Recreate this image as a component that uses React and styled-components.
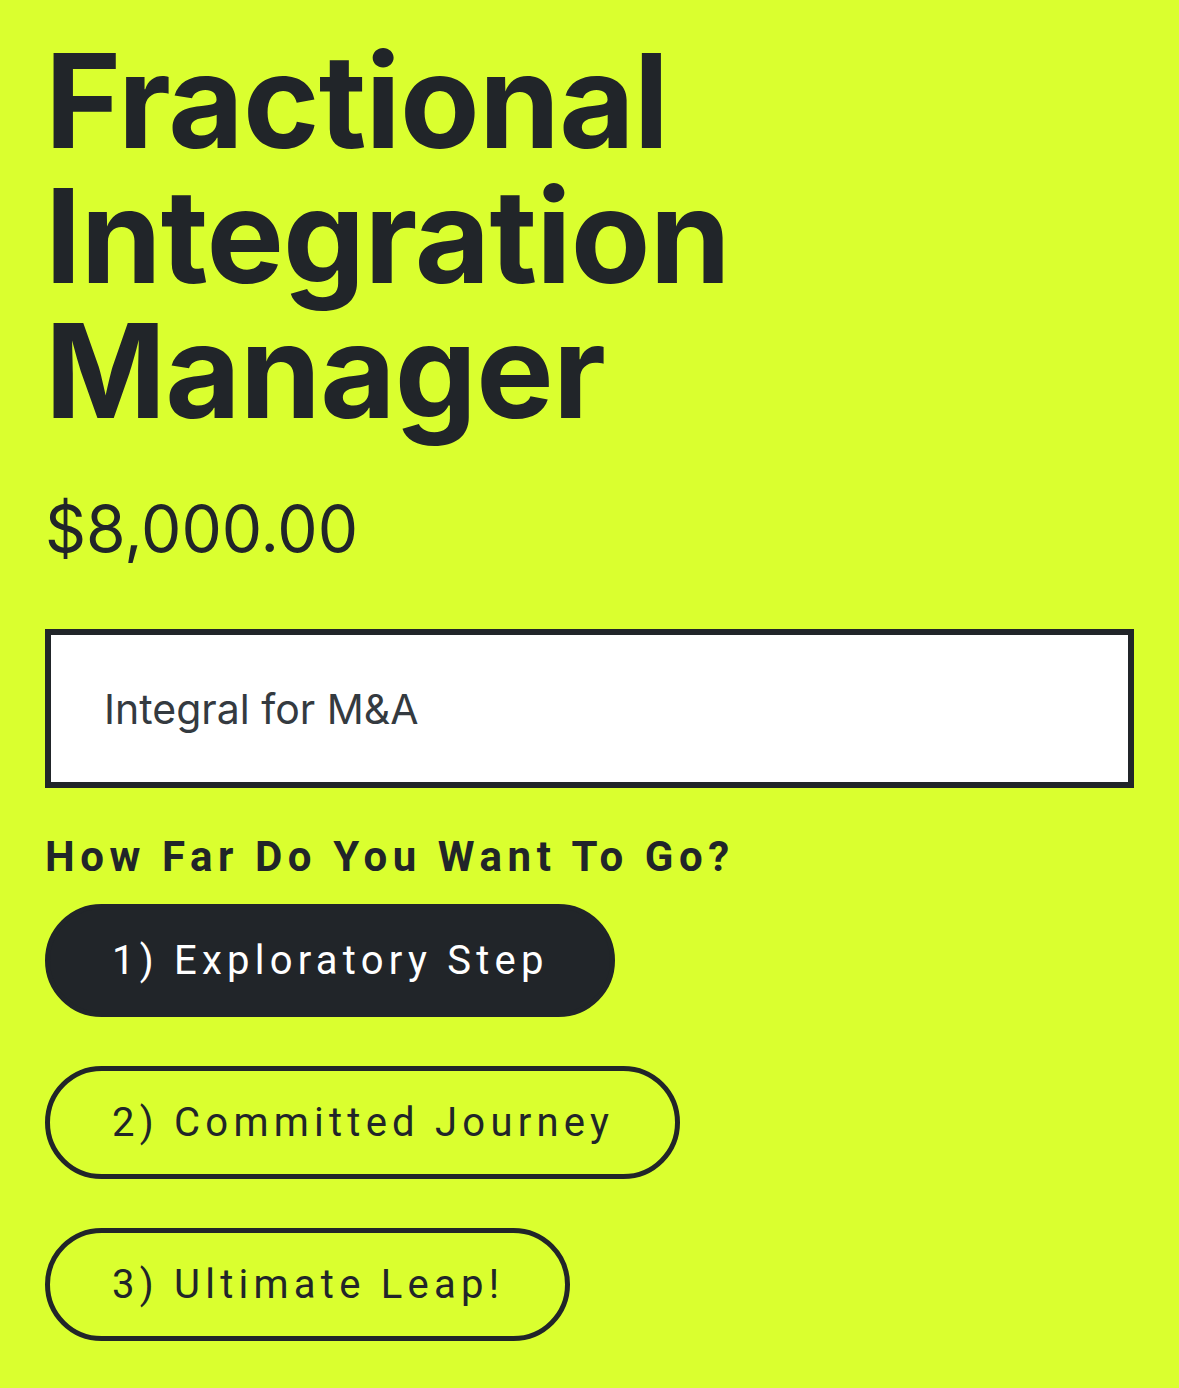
import React from "react";
import styled, { createGlobalStyle } from "styled-components";

const Global = createGlobalStyle`
  html, body { margin: 0; padding: 0; background: #DAFF2F; }
  body { font-family: Inter, "Noto Sans", sans-serif; color: #212529; }
`;

const Page = styled.main`
  padding: 33px 45px 40px;
  display: flex;
  flex-direction: column;
`;

const Title = styled.h1`
  margin: 0;
  font-family: Inter, sans-serif;
  font-weight: 700;
  font-size: 130px;
  line-height: 135px;
  letter-spacing: -0.006em;
  color: #212529;
`;

const Price = styled.div`
  margin-top: 51px;
  font-family: Inter, sans-serif;
  font-size: 64px;
  line-height: 79px;
  font-weight: 400;
  color: #212529;
`;

const Field = styled.div`
  margin-top: 61px;
  height: 159px;
  box-sizing: border-box;
  border: 6px solid #212529;
  background: #fff;
  display: flex;
  align-items: center;
  padding-left: 53px;
  font-family: Inter, sans-serif;
  font-size: 41px;
  color: #343a40;
`;

const Label = styled.div`
  margin-top: 44px;
  font-family: Roboto, sans-serif;
  font-weight: 700;
  font-size: 42px;
  line-height: 50px;
  letter-spacing: 0.133em;
  color: #212529;
`;

const Options = styled.div`
  margin-top: 22px;
  display: flex;
  flex-direction: column;
  align-items: flex-start;
  gap: 49px;
`;

const Option = styled.button`
  box-sizing: border-box;
  height: 113px;
  padding: 0 61px 0 62px;
  border: 5px solid #212529;
  border-radius: 60px;
  background: ${(p) => (p.$active ? "#212529" : "transparent")};
  color: ${(p) => (p.$active ? "#ffffff" : "#212529")};
  font-family: Roboto, sans-serif;
  font-weight: 400;
  font-size: 40px;
  letter-spacing: 0.131em;
  cursor: pointer;
`;

const options = ["1) Exploratory Step", "2) Committed Journey", "3) Ultimate Leap!"];

export default function App() {
  return (
    <>
      <Global />
      <Page>
        <Title>
          Fractional
          <br />
          Integration
          <br />
          Manager
        </Title>
        <Price>$8,000.00</Price>
        <Field>Integral for M&amp;A</Field>
        <Label>How Far Do You Want To Go?</Label>
        <Options>
          {options.map((o, i) => (
            <Option key={o} $active={i === 0}>
              {o}
            </Option>
          ))}
        </Options>
      </Page>
    </>
  );
}
